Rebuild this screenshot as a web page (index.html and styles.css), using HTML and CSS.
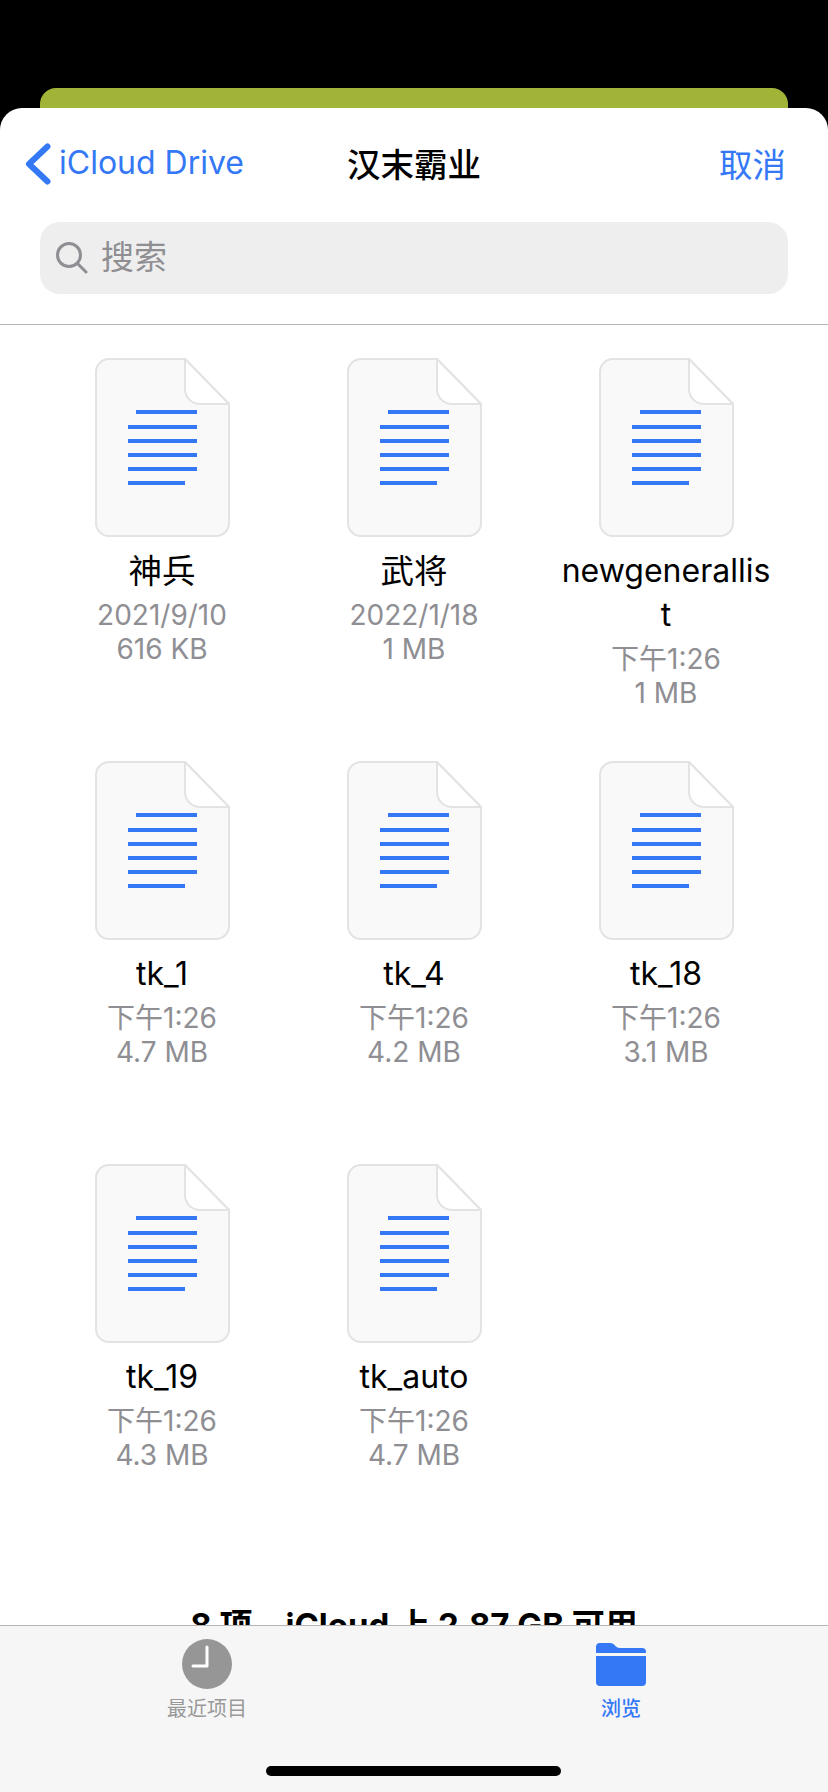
FILE: index.html
```html
<!DOCTYPE html>
<html lang="zh-CN">
<head>
  <meta charset="UTF-8" />
  <title>汉末霸业</title>
  <link rel="stylesheet" href="styles.css">
</head>

<body>

  <svg class="sprite" width="0" height="0">
    <symbol id="doc" viewBox="0 0 135 179">
      <path class="doc-page" d="M14 1H90L134 46V165a13 13 0 0 1-13 13H14a13 13 0 0 1-13-13V14A13 13 0 0 1 14 1Z"/>
      <path class="doc-fold" d="M90 1V31a15 15 0 0 0 15 15H134Z"/>
      <path class="doc-lines" d="M41 54H102M33 69H102M33 83H102M33 97H102M33 111H102M33 125H90"/>
    </symbol>
  </svg>

  <div class="back-card"></div>

  <div class="sheet">
    <div class="nav">
      <a class="back">
        <svg class="chevron" width="26" height="42" viewBox="0 0 26 42"><path d="M22.5 3.5 4 21l18.500 17.500"/></svg>
        iCloud Drive
      </a>
      <div class="title">汉末霸业</div>
      <a class="cancel">取消</a>
    </div>

    <div class="search">
      <svg class="search-icon" width="32" height="32" viewBox="0 0 32 32"><circle cx="13" cy="13" r="11.500"/><path d="M21.500 21.500 30 30"/></svg>
      <span class="search-text">搜索</span>
    </div>

    <div class="content">
      <div class="files">
        <div class="file">
          <svg class="doc" width="135" height="179"><use href="#doc"/></svg>
          <div class="name cjk">神兵</div>
          <div class="meta">2021/9/10</div>
          <div class="meta">616 KB</div>
        </div>
        <div class="file">
          <svg class="doc" width="135" height="179"><use href="#doc"/></svg>
          <div class="name cjk">武将</div>
          <div class="meta">2022/1/18</div>
          <div class="meta">1 MB</div>
        </div>
        <div class="file">
          <svg class="doc" width="135" height="179"><use href="#doc"/></svg>
          <div class="name">newgenerallist</div>
          <div class="meta">下午1:26</div>
          <div class="meta">1 MB</div>
        </div>
        <div class="file">
          <svg class="doc" width="135" height="179"><use href="#doc"/></svg>
          <div class="name">tk_1</div>
          <div class="meta">下午1:26</div>
          <div class="meta">4.7 MB</div>
        </div>
        <div class="file">
          <svg class="doc" width="135" height="179"><use href="#doc"/></svg>
          <div class="name">tk_4</div>
          <div class="meta">下午1:26</div>
          <div class="meta">4.2 MB</div>
        </div>
        <div class="file">
          <svg class="doc" width="135" height="179"><use href="#doc"/></svg>
          <div class="name">tk_18</div>
          <div class="meta">下午1:26</div>
          <div class="meta">3.1 MB</div>
        </div>
        <div class="file">
          <svg class="doc" width="135" height="179"><use href="#doc"/></svg>
          <div class="name">tk_19</div>
          <div class="meta">下午1:26</div>
          <div class="meta">4.3 MB</div>
        </div>
        <div class="file">
          <svg class="doc" width="135" height="179"><use href="#doc"/></svg>
          <div class="name">tk_auto</div>
          <div class="meta">下午1:26</div>
          <div class="meta">4.7 MB</div>
        </div>
      </div>
      <div class="summary">8 项，iCloud 上 2.87 GB 可用</div>
    </div>

    <div class="tabbar">
      <div class="tab">
        <svg class="tab-icon" width="50" height="50" viewBox="0 0 50 50">
          <circle class="clock-face" cx="25" cy="25" r="25"/>
          <path class="clock-hands" d="M25 8V27H11"/>
        </svg>
        <span>最近项目</span>
      </div>
      <div class="tab active">
        <svg class="tab-icon" width="50" height="50" viewBox="0 0 50 50">
          <path class="folder" d="M0 14V8a4 4 0 0 1 4-4H14c5 0 5 5 10 5H46a4 4 0 0 1 4 4v1H0ZM0 17H50V43a4 4 0 0 1-4 4H4a4 4 0 0 1-4-4Z"/>
        </svg>
        <span>浏览</span>
      </div>
      <div class="home-bar"></div>
    </div>
  </div>

</body>
</html>
```

FILE: styles.css
```css
body {
  margin: 0;
  height: 1792px;
  overflow: hidden;
  background: #000;
  font-family: Inter, "Noto Sans CJK SC", sans-serif;
  color: #000;
  display: flex;
  flex-direction: column;
}

.sprite {
  display: block;
  height: 0;
}

.back-card {
  flex: 0 0 20px;
  margin: 88px 40px 0;
  background: #a1b438;
  border-radius: 16px 16px 0 0;
}

.sheet {
  flex: 1;
  min-height: 0;
  display: flex;
  flex-direction: column;
  background: #fff;
  border-radius: 22px 22px 0 0;
  overflow: hidden;
}

/* top bar */
.nav {
  flex: 0 0 114px;
  box-sizing: border-box;
  padding: 0 25px 5px;
  display: grid;
  grid-template-columns: 1fr auto 1fr;
  align-items: center;
  font-size: 33.5px;
}

.back {
  display: flex;
  align-items: center;
  gap: 8px;
  color: #3478f6;
  font-size: 32px;
}

.chevron {
  margin-bottom: -3px;
}

.chevron path {
  fill: none;
  stroke: #3478f6;
  stroke-width: 6;
  stroke-linecap: round;
  stroke-linejoin: round;
}

.title {
  font-weight: 500;
}

.cancel {
  justify-self: end;
  margin-right: 17px;
  color: #3478f6;
}

.search {
  height: 72px;
  margin: 0 40px;
  padding-left: 16px;
  display: flex;
  align-items: center;
  gap: 13px;
  background: #eee;
  border-radius: 20px;
  color: #8e8e93;
  font-size: 33px;
}

.search-text {
  padding-bottom: 6px;
}

.search-icon {
  fill: none;
  stroke: #8e8e93;
  stroke-width: 3;
  stroke-linecap: round;
}

/* file grid */
.content {
  flex: 1;
  min-height: 0;
  overflow: hidden;
  margin-top: 30px;
  border-top: 1px solid #b5b5b5;
}

.files {
  display: grid;
  grid-template-columns: repeat(3, 252px);
  grid-auto-rows: 403px;
  padding: 33px 36px 0;
}

.file {
  display: flex;
  flex-direction: column;
  align-items: center;
  text-align: center;
}

.doc {
  flex: none;
  margin-bottom: 12px;
}

.doc-page {
  fill: #f9f9f9;
  stroke: #e3e3e3;
  stroke-width: 2;
}

.doc-fold {
  fill: #fff;
  stroke: #e3e3e3;
  stroke-width: 2;
  stroke-linejoin: round;
}

.doc-lines {
  fill: none;
  stroke: #3478f6;
  stroke-width: 4;
}

.name {
  width: 212px;
  margin-bottom: 5px;
  font-size: 32px;
  line-height: 44px;
  word-break: break-all;
}

.name.cjk {
  font-size: 33.5px;
}

.meta {
  font-size: 28px;
  line-height: 34px;
  color: #8e8e93;
}

.summary {
  margin-top: 38px;
  text-align: center;
  font-size: 33px;
  font-weight: 700;
  line-height: 40px;
}

/* bottom tabs */
.tabbar {
  position: relative;
  flex: 0 0 167px;
  display: grid;
  grid-template-columns: 1fr 1fr;
  background: #f6f6f6;
  border-top: 1px solid #b5b5b5;
  box-sizing: border-box;
}

.tab {
  display: flex;
  flex-direction: column;
  align-items: center;
  padding-top: 13px;
  font-size: 20px;
  line-height: 28px;
  color: #999;
}

.tab.active {
  color: #3478f6;
  font-weight: 500;
}

.tab-icon {
  margin-bottom: 6px;
}

.clock-face {
  fill: #969696;
}

.clock-hands {
  fill: none;
  stroke: #fff;
  stroke-width: 3;
  stroke-linecap: round;
  stroke-linejoin: round;
}

.folder {
  fill: #3478f6;
}

.home-bar {
  position: absolute;
  left: 266px;
  top: 140px;
  width: 295px;
  height: 10px;
  background: #000;
  border-radius: 5px;
}
```
